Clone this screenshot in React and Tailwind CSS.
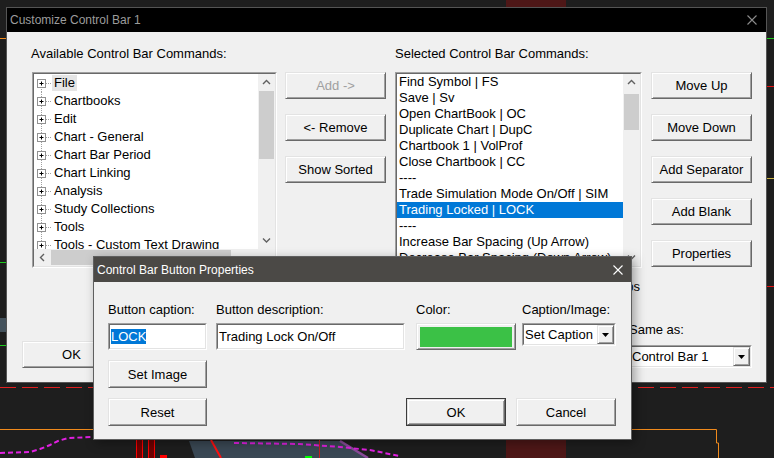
import React from 'react';

const FONT = "font-['Liberation_Sans',Arial,sans-serif]";

function Btn({ children, className = '', disabled = false, isDefault = false }) {
  return (
    <div className={`${isDefault ? 'border border-[#3c3c3c]' : ''} bg-[#f0f0f0] ${className}`}>
      <div
        className={`flex h-full w-full items-center justify-center border border-t-[#e3e3e3] border-l-[#e3e3e3] border-r-[#696969] border-b-[#696969] shadow-[inset_1px_1px_0_#ffffff,inset_-1px_-1px_0_#a0a0a0] text-[13px] leading-none ${
          disabled ? 'text-[#a0a0a0]' : 'text-black'
        }`}
      >
        {children}
      </div>
    </div>
  );
}

function XIcon({ color }) {
  return (
    <svg width="10" height="10" viewBox="0 0 10 10" className="shrink-0">
      <path d="M0.5 0.5 L9.5 9.5 M9.5 0.5 L0.5 9.5" stroke={color} strokeWidth="1.1" fill="none" />
    </svg>
  );
}

function Chevron({ dir }) {
  if (dir === 'left') {
    return (
      <svg width="7" height="9" viewBox="0 0 7 9">
        <path d="M5 1 L1.5 4.5 L5 8" fill="none" stroke="#606060" strokeWidth="1.4" />
      </svg>
    );
  }
  const d = dir === 'up' ? 'M1 5 L4.5 1.5 L8 5' : 'M1 1.5 L4.5 5 L8 1.5';
  return (
    <svg width="9" height="7" viewBox="0 0 9 7">
      <path d={d} fill="none" stroke="#606060" strokeWidth="1.4" />
    </svg>
  );
}

function DownTri() {
  return (
    <svg width="7" height="4" viewBox="0 0 7 4">
      <path d="M0 0 L7 0 L3.5 4 Z" fill="#000" />
    </svg>
  );
}

function VScroll({ thumbClass }) {
  return (
    <div className="flex h-full w-[17px] flex-col bg-[#f0f0f0]">
      <div className="flex h-[17px] shrink-0 items-center justify-center">
        <Chevron dir="up" />
      </div>
      <div className={`mx-[1px] shrink-0 bg-[#cdcdcd] ${thumbClass}`} />
      <div className="flex-1" />
      <div className="flex h-[17px] shrink-0 items-center justify-center">
        <Chevron dir="down" />
      </div>
    </div>
  );
}

function TreeGlyph({ first }) {
  return (
    <svg width="16" height="18" viewBox="0 0 16 18" className="ml-[2px] shrink-0">
      <line x1="5.5" y1={first ? 9 : 0} x2="5.5" y2="18" stroke="#a0a0a0" strokeDasharray="1 1" />
      <line x1="10" y1="9.5" x2="16" y2="9.5" stroke="#a0a0a0" strokeDasharray="1 1" />
      <rect x="1.5" y="5.5" width="8" height="8" fill="#ffffff" stroke="#919191" />
      <line x1="3.5" y1="9.5" x2="7.5" y2="9.5" stroke="#000" />
      <line x1="5.5" y1="7.5" x2="5.5" y2="11.5" stroke="#000" />
    </svg>
  );
}

const treeItems = [
  'File',
  'Chartbooks',
  'Edit',
  'Chart - General',
  'Chart Bar Period',
  'Chart Linking',
  'Analysis',
  'Study Collections',
  'Tools',
  'Tools - Custom Text Drawing',
];

const listItems = [
  'Find Symbol | FS',
  'Save | Sv',
  'Open ChartBook | OC',
  'Duplicate Chart | DupC',
  'Chartbook 1 | VolProf',
  'Close Chartbook | CC',
  '----',
  'Trade Simulation Mode On/Off | SIM',
  'Trading Locked | LOCK',
  '----',
  'Increase Bar Spacing (Up Arrow)',
  'Decrease Bar Spacing (Down Arrow)',
  'Chart Settings | CS',
];

const sunkenOuter = 'border border-t-[#a0a0a0] border-l-[#a0a0a0] border-r-white border-b-white';
const sunkenInner = 'border border-t-[#696969] border-l-[#696969] border-r-[#e3e3e3] border-b-[#e3e3e3]';

function Chart() {
  return (
    <svg className="absolute inset-0" width="774" height="458" viewBox="0 0 774 458">
      <rect x="506" y="0" width="60" height="458" fill="#4e1717" />
      <line x1="0" y1="38.5" x2="8" y2="38.5" stroke="#f08a1c" />
      <line x1="764" y1="38.5" x2="774" y2="38.5" stroke="#1ec81e" />
      <line x1="764" y1="86.5" x2="774" y2="86.5" stroke="#e01010" />
      <line x1="764" y1="178.5" x2="774" y2="178.5" stroke="#c8b040" />
      <line x1="764" y1="286.5" x2="774" y2="286.5" stroke="#e01010" />
      <line x1="0" y1="262.5" x2="8" y2="262.5" stroke="#1ec81e" />
      <rect x="0" y="318" width="8" height="14" fill="#44525c" />
      <line x1="0" y1="345.5" x2="8" y2="345.5" stroke="#1ec81e" />
      <line x1="0" y1="387.5" x2="774" y2="387.5" stroke="#e02020" strokeDasharray="16 6" />
      <polyline points="0,429.5 716.5,429.5 716.5,443 718.5,443 718.5,458" fill="none" stroke="#f08a1c" />
      <polyline
        points="0,453 30,452 40,449 50,445 58,441 68,438 93,437"
        stroke="#e020e0"
        strokeWidth="2"
        strokeDasharray="5 3"
        fill="none"
      />
      <polygon points="189,441 340,441 368,458 195,458" fill="#3a4854" />
      <line x1="340" y1="441" x2="368" y2="458" stroke="#8a4a9a" strokeWidth="2.5" />
      <line x1="211" y1="440" x2="221" y2="458" stroke="#ff1010" strokeWidth="2" />
      <line x1="319.5" y1="440" x2="319.5" y2="458" stroke="#c02020" />
      <polyline
        points="234,443 300,444 340,447 370,450 399,456"
        fill="none"
        stroke="#e020e0"
        strokeWidth="2"
        strokeDasharray="5 3"
      />
      <rect x="136.5" y="438.5" width="6" height="22" fill="#700000" stroke="#ff0000" />
      <rect x="148.5" y="438.5" width="6" height="22" fill="#700000" stroke="#ff0000" />
      <rect x="160" y="455" width="7" height="3" fill="#ff0000" />
      <rect x="305" y="456" width="7" height="2" fill="#00ff00" />
    </svg>
  );
}

function MainDialog() {
  return (
    <div className="absolute left-[6px] top-[7px] flex h-[376px] w-[761px] flex-col border border-[#555555] bg-[#f0f0f0]">
      <div className="flex h-[24px] shrink-0 items-center justify-between bg-black pl-[3px] pr-[9px]">
        <span className="text-[12px] leading-none text-[#9c9c9c]">Customize Control Bar 1</span>
        <XIcon color="#8c8c8c" />
      </div>

      <div className="flex pl-[25px] pt-[14px]">
        {/* column 1 */}
        <div className="flex w-[245px] shrink-0 flex-col">
          <div className="-ml-[1px] h-[16px] text-[13px] leading-[16px] text-black">Available Control Bar Commands:</div>
          <div className={`mt-[10px] h-[196px] ${sunkenOuter}`}>
            <div className={`grid h-full w-full grid-cols-[1fr_17px] grid-rows-[1fr_17px] bg-white ${sunkenInner}`}>
              <div className="flex flex-col overflow-hidden">
                {treeItems.map((t, i) => (
                  <div key={t} className="flex h-[18px] shrink-0 items-center">
                    <TreeGlyph first={i === 0} />
                    <span
                      className={`whitespace-nowrap px-[2px] text-[13px] leading-[16px] text-black ${
                        i === 0 ? 'bg-[#e5e5e5]' : ''
                      }`}
                    >
                      {t}
                    </span>
                  </div>
                ))}
              </div>
              <VScroll thumbClass="mt-0 h-[68px]" />
              <div className="flex items-center bg-[#f0f0f0]">
                <div className="flex h-full w-[17px] items-center justify-center">
                  <Chevron dir="left" />
                </div>
                <div className="my-[1px] h-[15px] w-[180px] bg-[#cdcdcd]" />
              </div>
              <div className="bg-[#f0f0f0]" />
            </div>
          </div>
        </div>

        {/* column 2 */}
        <div className="ml-[8px] flex w-[101px] shrink-0 flex-col gap-[15px] pt-[26px]">
          <Btn className="h-[27px]" disabled>
            Add -&gt;
          </Btn>
          <Btn className="h-[27px]">&lt;- Remove</Btn>
          <Btn className="h-[27px]">Show Sorted</Btn>
        </div>

        {/* column 3 */}
        <div className="ml-[9px] flex w-[247px] shrink-0 flex-col">
          <div className="h-[16px] text-[13px] leading-[16px] text-black">Selected Control Bar Commands:</div>
          <div className={`mt-[10px] h-[196px] ${sunkenOuter}`}>
            <div className={`flex h-full w-full bg-white ${sunkenInner}`}>
              <div className="flex min-w-0 flex-1 flex-col overflow-hidden">
                {listItems.map((t, i) => (
                  <div
                    key={i}
                    className={`flex h-[16px] shrink-0 items-center whitespace-nowrap pl-[2px] text-[13px] leading-[16px] ${
                      i === 8 ? 'bg-[#0078d7] text-white' : 'text-black'
                    }`}
                  >
                    {t}
                  </div>
                ))}
              </div>
              <VScroll thumbClass="mt-[3px] h-[36px]" />
            </div>
          </div>
        </div>

        {/* column 4 */}
        <div className="ml-[9px] flex w-[101px] shrink-0 flex-col gap-[15px] pt-[26px]">
          <Btn className="h-[27px]">Move Up</Btn>
          <Btn className="h-[27px]">Move Down</Btn>
          <Btn className="h-[27px]">Add Separator</Btn>
          <Btn className="h-[27px]">Add Blank</Btn>
          <Btn className="h-[27px]">Properties</Btn>
        </div>
      </div>

      <div className="flex flex-1 items-end justify-between pb-[14px] pl-[15px] pr-[14px]">
        <div className="flex gap-[10px]">
          <Btn className="h-[27px] w-[99px]">OK</Btn>
          <Btn className="h-[27px] w-[99px]">Cancel</Btn>
        </div>
        <div className="flex w-[124px] flex-col">
          <div className="flex h-[16px] w-[12px] justify-end whitespace-nowrap text-[13px] leading-[16px] text-black">
            Show Tool Tips
          </div>
          <div className="mt-[27px] h-[16px] pl-[1px] text-[13px] leading-[16px] text-black">Same as:</div>
          <div className={`mt-[7px] h-[23px] ${sunkenOuter}`}>
            <div className={`flex h-full w-full items-center bg-white ${sunkenInner}`}>
              <span className="flex-1 pl-[2px] text-[13px] leading-none text-black">Control Bar 1</span>
              <Btn className="mr-[0px] h-full w-[17px]">
                <DownTri />
              </Btn>
            </div>
          </div>
        </div>
      </div>
    </div>
  );
}

function PropsDialog() {
  return (
    <div className="absolute left-[93px] top-[256px] flex h-[184px] w-[539px] flex-col border border-[#5f5f5f] bg-[#f0f0f0] shadow-[3px_3px_10px_rgba(0,0,0,0.35)]">
      <div className="flex h-[25px] shrink-0 items-center justify-between bg-[#4b4946] pl-[3px] pr-[8px]">
        <span className="text-[12px] leading-none text-white">Control Bar Button Properties</span>
        <XIcon color="#ffffff" />
      </div>
      <div className="flex flex-col pl-[14px] pr-[15px] pt-[20px]">
        <div className="flex">
          <div className="flex w-[99px] shrink-0 flex-col">
            <div className="h-[16px] text-[13px] leading-[16px] text-black">Button caption:</div>
            <div className={`mt-[5px] h-[27px] ${sunkenOuter}`}>
              <div className={`flex h-full w-full items-center bg-white pl-[1px] ${sunkenInner}`}>
                <span className="bg-[#0078d7] text-[13px] leading-[15px] text-white">LOCK</span>
              </div>
            </div>
          </div>
          <div className="ml-[9px] flex w-[189px] shrink-0 flex-col">
            <div className="h-[16px] text-[13px] leading-[16px] text-black">Button description:</div>
            <div className={`mt-[5px] h-[27px] ${sunkenOuter}`}>
              <div className={`flex h-full w-full items-center bg-white pl-[1px] ${sunkenInner}`}>
                <span className="whitespace-nowrap text-[13px] leading-[15px] text-black">Trading Lock On/Off</span>
              </div>
            </div>
          </div>
          <div className="ml-[11px] flex w-[100px] shrink-0 flex-col">
            <div className="h-[16px] text-[13px] leading-[16px] text-black">Color:</div>
            <Btn className="mt-[5px] h-[27px]">
              <div className="h-[20px] w-[92px] bg-[#3bc146]" />
            </Btn>
          </div>
          <div className="ml-[6px] flex w-[94px] shrink-0 flex-col">
            <div className="h-[16px] whitespace-nowrap text-[13px] leading-[16px] text-black">Caption/Image:</div>
            <div className={`mt-[5px] h-[23px] ${sunkenOuter}`}>
              <div className={`flex h-full w-full items-center bg-white ${sunkenInner}`}>
                <span className="flex-1 whitespace-nowrap pl-[1px] text-[13px] leading-none text-black">Set Caption</span>
                <Btn className="h-full w-[17px] shrink-0">
                  <DownTri />
                </Btn>
              </div>
            </div>
          </div>
        </div>

        <Btn className="mt-[10px] h-[28px] w-[99px]">Set Image</Btn>

        <div className="mt-[10px] flex items-center justify-between">
          <Btn className="h-[28px] w-[99px]">Reset</Btn>
          <div className="flex gap-[10px]">
            <Btn className="h-[28px] w-[100px]" isDefault>
              OK
            </Btn>
            <Btn className="h-[28px] w-[100px]">Cancel</Btn>
          </div>
        </div>
      </div>
    </div>
  );
}

export default function App() {
  return (
    <div className={`relative h-[458px] w-[774px] overflow-hidden bg-[#1e1e1e] ${FONT}`}>
      <Chart />
      <MainDialog />
      <PropsDialog />
    </div>
  );
}
